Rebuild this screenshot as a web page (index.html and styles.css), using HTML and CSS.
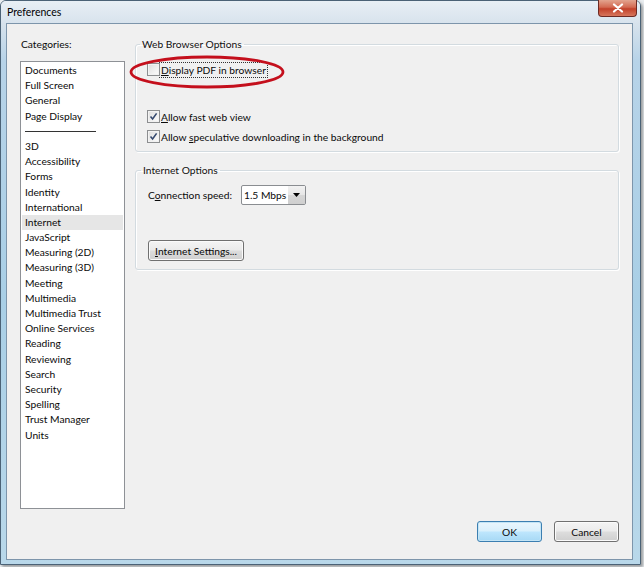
FILE: index.html
```html
<!DOCTYPE html>
<html>
<head>
<meta charset="utf-8">
<link rel="stylesheet" href="styles.css">
</head>
<body>
<div class="window">
  <div class="titlebar">
    <span class="title">Preferences</span>
    <div class="close">
      <svg width="12" height="10" viewBox="0 0 12 10"><path d="M2 1.5 L10 8.5 M10 1.5 L2 8.5" stroke="#fff" stroke-width="2.2" stroke-linecap="round"/></svg>
    </div>
  </div>
  <div class="frame-body">
    <div class="client">
      <div class="main">
        <div class="cats">
          <div class="cats-label">Categories:</div>
          <ul class="listbox">
            <li>Documents</li>
            <li>Full Screen</li>
            <li>General</li>
            <li>Page Display</li>
            <li class="sep"><span></span></li>
            <li>3D</li>
            <li>Accessibility</li>
            <li>Forms</li>
            <li>Identity</li>
            <li>International</li>
            <li class="sel">Internet</li>
            <li>JavaScript</li>
            <li>Measuring (2D)</li>
            <li>Measuring (3D)</li>
            <li>Meeting</li>
            <li>Multimedia</li>
            <li>Multimedia Trust</li>
            <li>Online Services</li>
            <li>Reading</li>
            <li>Reviewing</li>
            <li>Search</li>
            <li>Security</li>
            <li>Spelling</li>
            <li>Trust Manager</li>
            <li>Units</li>
          </ul>
        </div>
        <div class="panes">
          <fieldset class="group g1">
            <legend>Web Browser Options</legend>
            <div class="check-row">
              <span class="cb"></span>
              <span class="cb-label focus"><u>D</u>isplay PDF in browser</span>
            </div>
            <div class="check-row row2">
              <span class="cb checked"><svg width="13" height="13" viewBox="0 0 13 13"><path d="M3.5 6.5 L5.6 9 L9.6 3.4" fill="none" stroke="#34486e" stroke-width="1.6"/></svg></span>
              <span class="cb-label"><u>A</u>llow fast web view</span>
            </div>
            <div class="check-row row3">
              <span class="cb checked"><svg width="13" height="13" viewBox="0 0 13 13"><path d="M3.5 6.5 L5.6 9 L9.6 3.4" fill="none" stroke="#34486e" stroke-width="1.6"/></svg></span>
              <span class="cb-label">Allow <u>s</u>peculative downloading in the background</span>
            </div>
          </fieldset>
          <fieldset class="group g2">
            <legend>Internet Options</legend>
            <div class="speed-row">
              <span class="speed-label">C<u>o</u>nnection speed:</span>
              <div class="select">
                <span class="select-text">1.5 Mbps</span>
                <span class="select-arrow"><svg width="7" height="4" viewBox="0 0 7 4"><path d="M0 0 L7 0 L3.5 4 Z" fill="#000"/></svg></span>
              </div>
            </div>
            <div class="btn settings"><u>I</u>nternet Settings...</div>
          </fieldset>
        </div>
      </div>
      <div class="footer">
        <div class="btn ok">OK</div>
        <div class="btn cancel">Cancel</div>
      </div>
    </div>
  </div>
  <svg class="ellipse" width="160" height="36" viewBox="0 0 160 36">
    <ellipse cx="79" cy="17" rx="76" ry="15" fill="none" stroke="#c40f1c" stroke-width="2.8"/>
  </svg>
</div>
</body>
</html>
```
FILE: styles.css
```css
html, body {
  margin: 0;
  padding: 0;
}
body {
  background: #e9edf0;
  width: 644px;
  height: 567px;
  overflow: hidden;
  font-family: Lato, "Open Sans", sans-serif;
  font-size: 10.25px;
  color: #0a0a0a;
}
.window {
  position: relative;
  width: 641px;
  height: 565px;
  box-sizing: border-box;
  border: 1px solid #4b6276;
  border-radius: 6px 6px 0 0;
  background: linear-gradient(to bottom, #dfe8f0 0px, #d6e2ec 24px, #b7d3e8 60px, #a9cfe6 300px, #b9d8ea 565px);
  box-shadow: 2px 2px 3px rgba(0,0,0,0.35);
  display: flex;
  flex-direction: column;
}
.titlebar {
  height: 22px;
  display: flex;
  align-items: flex-start;
  background: linear-gradient(to bottom, #e8eff5, #d8e3ed);
  border-radius: 5px 5px 0 0;
}
.title {
  margin-left: 6px;
  line-height: 22px;
  font-size: 10.5px;
  color: #000;
}
.close {
  margin-left: auto;
  margin-right: 3px;
  margin-top: -1px;
  width: 39px;
  height: 17px;
  box-sizing: border-box;
  border: 1px solid #6d2a23;
  border-top: none;
  border-radius: 0 0 4px 4px;
  background: linear-gradient(to bottom, #e3a48f 0%, #d36a52 45%, #c2412a 55%, #d7765c 100%);
  display: flex;
  align-items: center;
  justify-content: center;
}
.frame-body {
  flex: 1;
  display: flex;
  padding: 0 7px 4px 5px;
}
.client {
  flex: 1;
  border: 1px solid #7d95ab;
  background: #f0f0f0;
  display: flex;
  flex-direction: column;
  padding: 12px 13px 17px 13px;
}
.main {
  display: flex;
  gap: 10px;
}
.cats {
  width: 105px;
  flex: none;
}
.cats-label {
  line-height: 16px;
  padding-left: 1px;
  margin-bottom: 9px;
}
.listbox {
  margin: 0;
  padding: 1px 0 0 0;
  list-style: none;
  height: 448px;
  box-sizing: border-box;
  background: #fff;
  border: 1px solid #8e9196;
}
.listbox li {
  height: 15.2px;
  line-height: 15.2px;
  padding-left: 4px;
  white-space: nowrap;
}
.listbox li.sel {
  background: #e6e6e6;
  margin: 0 1px;
  padding-left: 3px;
}
.listbox li.sep {
  display: flex;
  align-items: center;
}
.listbox li.sep span {
  display: block;
  width: 71px;
  height: 1px;
  background: #333;
}
.panes {
  flex: 1;
  display: flex;
  flex-direction: column;
}
.group {
  margin: 0;
  border: 1px solid #d3dbe0;
  border-radius: 3px;
  box-shadow: inset 1px 1px 0 #fff, 1px 1px 0 #fff;
  min-width: 0;
}
.group legend {
  padding: 0 2px;
  margin-left: -7px;
  line-height: 14px;
  color: #111;
}
.g1 {
  margin-top: 1px;
  padding: 11px 11px 7px 11px;
}
.g2 {
  margin-top: 11px;
  padding: 8px 11px 8px 12px;
}
.check-row {
  display: flex;
  align-items: center;
  height: 15px;
}
.check-row.row2 {
  margin-top: 32px;
}
.check-row.row3 {
  margin-top: 5px;
}
.cb {
  width: 13px;
  height: 13px;
  box-sizing: border-box;
  border: 1px solid #8c8e90;
  background: linear-gradient(135deg, #dcdcdc 0%, #f4f4f4 70%, #fbfbfb 100%);
  box-shadow: inset 0 0 0 1px #f2f2f2;
  flex: none;
  position: relative;
}
.cb svg {
  position: absolute;
  left: -1px;
  top: -1px;
}
.cb-label {
  margin-left: 0;
  padding: 0 1px;
  line-height: 14px;
  white-space: nowrap;
}
.cb-label.focus {
  outline: 1px dotted #333;
  outline-offset: 0;
}
.speed-row {
  display: flex;
  align-items: center;
}
.speed-label {
  width: 93px;
  flex: none;
}
.select {
  width: 65px;
  height: 20px;
  box-sizing: border-box;
  border: 1px solid #8a8d91;
  border-radius: 2px;
  background: #fff;
  display: flex;
  align-items: stretch;
}
.select-text {
  flex: 1;
  padding-left: 2px;
  line-height: 18px;
}
.select-arrow {
  width: 17px;
  background: linear-gradient(to bottom, #f2f2f2 0%, #e6e6e6 50%, #d6d6d6 51%, #cfcfcf 100%);
  display: flex;
  align-items: center;
  justify-content: center;
}
.btn {
  height: 21px;
  box-sizing: border-box;
  border: 1px solid #707070;
  border-radius: 3px;
  background: linear-gradient(to bottom, #f4f4f4 0%, #ebebeb 48%, #dddddd 52%, #cfcfcf 100%);
  box-shadow: inset 0 0 0 1px #fbfbfb;
  display: flex;
  align-items: center;
  justify-content: center;
  white-space: nowrap;
}
.settings {
  margin-top: 35px;
  width: 96px;
}
.footer {
  margin-top: 12px;
  display: flex;
  justify-content: flex-end;
  gap: 12px;
}
.footer .btn {
  width: 65px;
}
.btn.ok {
  border-color: #3c7fb1;
  background: linear-gradient(to bottom, #eaf6fd 0%, #d9f0fc 48%, #bee6fd 52%, #a7d9f5 100%);
  box-shadow: inset 0 0 0 1px #c4e5f6;
}
.ellipse {
  position: absolute;
  left: 127px;
  top: 54px;
}
```
